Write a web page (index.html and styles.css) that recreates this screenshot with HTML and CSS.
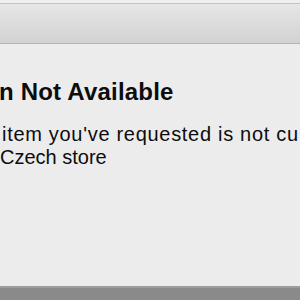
FILE: index.html
```html
<!DOCTYPE html>
<html>
<head>
<meta charset="utf-8">
<link rel="stylesheet" href="styles.css">
</head>
<body>
<div class="window">
  <div class="strip"></div>
  <div class="titlebar"></div>
  <div class="content">
    <h1 class="title">n Not Available</h1>
    <p class="message">
      <span class="line line-first">item you've requested is not cu</span>
      <span class="line">Czech store</span>
    </p>
  </div>
</div>
</body>
</html>
```

FILE: styles.css
```css
html, body {
  margin: 0;
  padding: 0;
}
body {
  width: 300px;
  height: 300px;
  overflow: hidden;
  background: #8a8a8a;
  font-family: "Liberation Sans", Arial, sans-serif;
  color: #0d0d0d;
}
.window {
  display: flex;
  flex-direction: column;
  width: 300px;
}
.strip {
  height: 3px;
  background: #efefef;
  border-bottom: 1px solid #c4c4c4;
}
.titlebar {
  height: 39px;
  background: linear-gradient(#e7e6e7, #d3d2d3);
  border-bottom: 1px solid #b3b3b3;
}
.content {
  height: 244px;
  background: #ececec;
  border-bottom: 2px solid #9c9c9c;
  padding-top: 36px;
  box-sizing: border-box;
  overflow: hidden;
}
.title {
  margin: 0 0 0 -1px;
  font-size: 24px;
  line-height: 24px;
  font-weight: bold;
  letter-spacing: 0.2px;
  white-space: nowrap;
}
.message {
  margin: 19px 0 0 0;
  font-size: 20px;
  line-height: 23px;
  white-space: nowrap;
}
.line {
  display: block;
}
.line-first {
  padding-left: 2px;
  letter-spacing: 0.7px;
}
```
